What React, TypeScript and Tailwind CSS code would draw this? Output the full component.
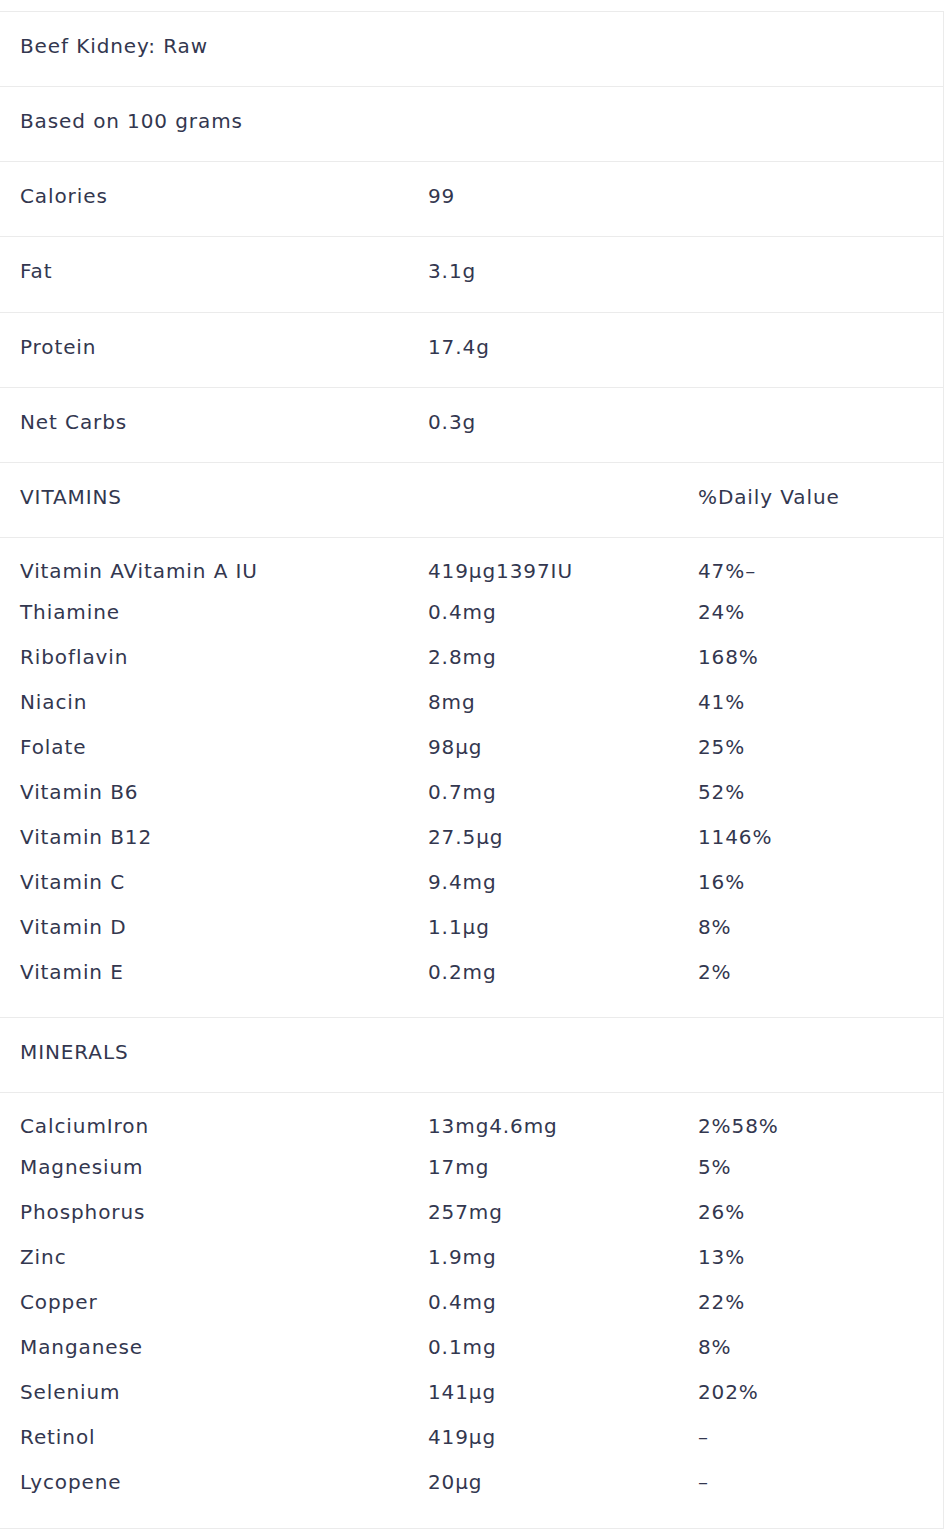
import React from 'react';

// Tabla de nutrientes: riñón de res crudo
const vitamins: [string, string, string][] = [
  ['Thiamine', '0.4mg', '24%'],
  ['Riboflavin', '2.8mg', '168%'],
  ['Niacin', '8mg', '41%'],
  ['Folate', '98µg', '25%'],
  ['Vitamin B6', '0.7mg', '52%'],
  ['Vitamin B12', '27.5µg', '1146%'],
  ['Vitamin C', '9.4mg', '16%'],
  ['Vitamin D', '1.1µg', '8%'],
  ['Vitamin E', '0.2mg', '2%'],
];

const minerals: [string, string, string][] = [
  ['Magnesium', '17mg', '5%'],
  ['Phosphorus', '257mg', '26%'],
  ['Zinc', '1.9mg', '13%'],
  ['Copper', '0.4mg', '22%'],
  ['Manganese', '0.1mg', '8%'],
  ['Selenium', '141µg', '202%'],
  ['Retinol', '419µg', '–'],
  ['Lycopene', '20µg', '–'],
];

const grid = 'grid grid-cols-[408px_270px_1fr] items-center pl-[20px]';

function Row({ cells, h = 'h-[75px]' }: { cells: string[]; h?: string }) {
  return (
    <div className={`${grid} ${h} pb-[7px] border-b border-[#ebebeb]`}>
      {cells.map((c, i) => (
        <div key={i}>{c}</div>
      ))}
    </div>
  );
}

function ListRow({ cells, h = 'h-[45px]' }: { cells: string[]; h?: string }) {
  return (
    <div className={`${grid} ${h}`}>
      {cells.map((c, i) => (
        <div key={i}>{c}</div>
      ))}
    </div>
  );
}

export default function App() {
  return (
    <div className="bg-white min-h-[1534px] pt-[11px]">
      <div
        className="w-[944px] border-t border-r border-[#ebebeb] text-[20px] leading-[28px] tracking-[0.045em] text-[#33374f]"
        style={{ fontFamily: '"DejaVu Sans", sans-serif' }}
      >
        <Row cells={['Beef Kidney: Raw']} />
        <Row cells={['Based on 100 grams']} />
        <Row cells={['Calories', '99']} />
        <Row cells={['Fat', '3.1g']} h="h-[76px]" />
        <Row cells={['Protein', '17.4g']} />
        <Row cells={['Net Carbs', '0.3g']} />
        <Row cells={['VITAMINS', '', '%Daily Value']} />

        {/* Bloque de vitaminas */}
        <div className="h-[480px] border-b border-[#ebebeb] pt-[15px]">
          <ListRow cells={['Vitamin AVitamin A IU', '419µg1397IU', '47%–']} h="h-[36px]" />
          {vitamins.map(v => (
            <ListRow key={v[0]} cells={v} />
          ))}
        </div>

        <Row cells={['MINERALS']} />

        {/* Bloque de minerales */}
        <div className="h-[436px] border-b border-[#ebebeb] pt-[15px]">
          <ListRow cells={['CalciumIron', '13mg4.6mg', '2%58%']} h="h-[36px]" />
          {minerals.map(m => (
            <ListRow key={m[0]} cells={m} />
          ))}
        </div>
      </div>
    </div>
  );
}
